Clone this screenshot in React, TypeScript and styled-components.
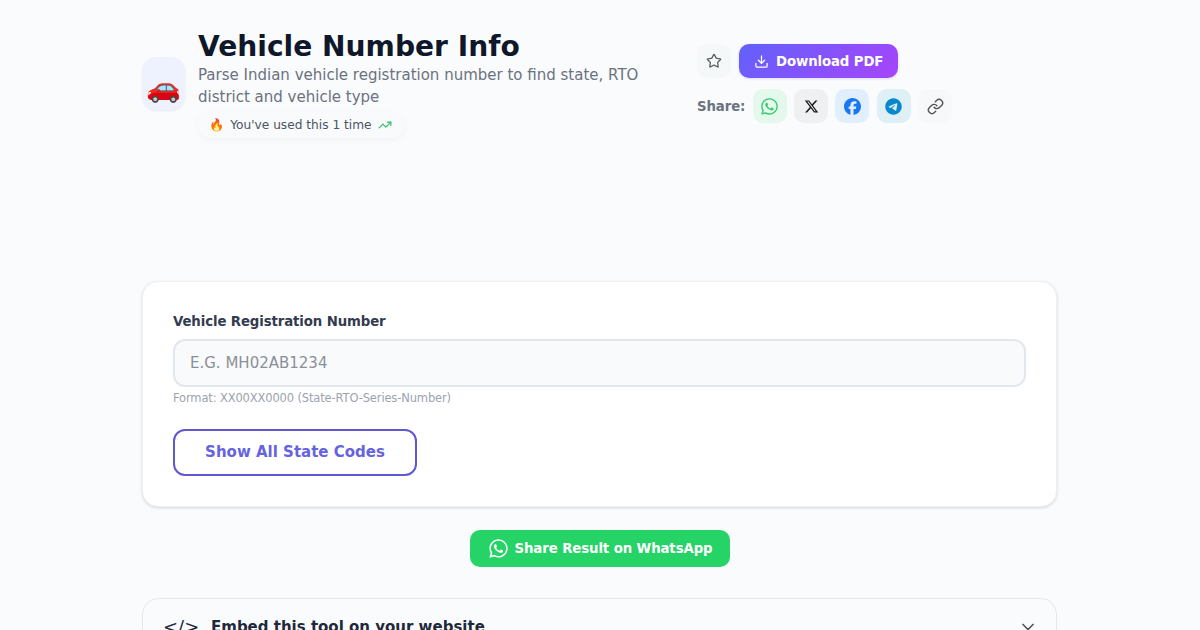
import React from "react";
import styled, { createGlobalStyle } from "styled-components";
import { Star, Download, TrendingUp, Link, ChevronDown } from "lucide-react";
import { FaWhatsapp, FaXTwitter, FaFacebook, FaTelegram } from "react-icons/fa6";

const GlobalStyle = createGlobalStyle`
  * { box-sizing: border-box; }
  html, body { margin: 0; height: 630px; overflow: hidden; }
  body {
    background: #fafbfd;
    font-family: "DejaVu Sans", "Noto Color Emoji", sans-serif;
    color: #0f172a;
  }
  button, input { font-family: inherit; }
  svg { display: block; flex: none; }
`;

const Page = styled.main`
  width: 915px;
  margin-left: 142px;
  padding-top: 30px;
`;

const Header = styled.header`
  display: flex;
  align-items: flex-start;
  height: 251px;
`;

const ToolIcon = styled.div`
  display: flex;
  align-items: center;
  justify-content: center;
  width: 43px;
  height: 53px;
  margin: 27px 13px 0 0;
  padding-top: 8px;
  border-radius: 14px;
  background: #eef2ff;
  font-size: 28px;
  line-height: 1;
  box-shadow: 0 1px 2px rgba(15, 23, 42, 0.08);
`;

const Intro = styled.div`
  width: 460px;
  margin-right: 39px;
`;

const Title = styled.h1`
  margin: 0;
  font-size: 28.125px;
  line-height: 34px;
  font-weight: 700;
`;

const Description = styled.p`
  margin: 0;
  font-size: 15px;
  line-height: 22px;
  color: #6b7280;
`;

const Usage = styled.div`
  display: inline-flex;
  align-items: center;
  gap: 6px;
  height: 26px;
  margin-top: 4px;
  padding: 0 11px;
  border-radius: 13px;
  background: #f8fafb;
  color: #4b5563;
  font-size: 12.2px;
  box-shadow: 0 2px 8px rgba(15, 23, 42, 0.04);
`;

const Actions = styled.div`
  display: flex;
  flex-direction: column;
  gap: 11px;
  padding-top: 14px;
`;

const ActionRow = styled.div<{ $gap: number }>`
  display: flex;
  align-items: center;
  gap: ${(p) => p.$gap}px;
`;

const IconButton = styled.button<{ $bg: string; $color: string }>`
  display: flex;
  align-items: center;
  justify-content: center;
  width: 34px;
  height: 34px;
  padding: 0;
  border: 0;
  border-radius: 10px;
  background: ${(p) => p.$bg};
  color: ${(p) => p.$color};
`;

const DownloadButton = styled.button`
  display: flex;
  align-items: center;
  gap: 7px;
  height: 34px;
  width: 159px;
  padding: 0 15px;
  border: 0;
  border-radius: 10px;
  background: linear-gradient(135deg, #6161fb, #a845fb);
  color: #fff;
  font-size: 13.3px;
  letter-spacing: -0.11px;
  font-weight: 700;
  white-space: nowrap;
  box-shadow: 0 1px 3px rgba(99, 102, 241, 0.2);
`;

const ShareLabel = styled.span`
  font-size: 13.3px;
  letter-spacing: -0.1px;
  font-weight: 700;
  color: #6b7280;
`;

const Card = styled.section`
  height: 226px;
  padding: 31px 30px;
  border: 1px solid #eef0f3;
  border-radius: 16px;
  background: #fff;
  box-shadow: 0 1px 3px rgba(15, 23, 42, 0.16);
`;

const Label = styled.label`
  display: block;
  font-size: 13.3px;
  letter-spacing: -0.11px;
  line-height: 18px;
  font-weight: 700;
  color: #333b50;
`;

const Input = styled.input`
  display: block;
  width: 100%;
  height: 48px;
  margin-top: 8px;
  padding: 0 15px 1px;
  border: 2px solid #e2e6ee;
  border-radius: 12px;
  background: #f9fafc;
  font-size: 15px;
  &::placeholder { color: #8b9097; opacity: 1; }
`;

const Hint = styled.p`
  margin: 3px 0 22px;
  font-size: 11.5px;
  letter-spacing: -0.14px;
  line-height: 17px;
  color: #9ca3af;
`;

const OutlineButton = styled.button`
  display: block;
  width: 244px;
  height: 47px;
  padding: 0 0 2px;
  border: 2px solid #6058d0;
  border-radius: 12px;
  background: #fff;
  color: #6663df;
  font-size: 15px;
  font-weight: 700;
`;

const WhatsAppButton = styled.button`
  display: flex;
  align-items: center;
  justify-content: center;
  gap: 6px;
  width: 260px;
  height: 37px;
  margin: 23px 0 31px 328px;
  padding: 0;
  border: 0;
  border-radius: 10px;
  background: #25d366;
  color: #fff;
  font-size: 13.3px;
  letter-spacing: -0.1px;
  font-weight: 700;
`;

const EmbedPanel = styled.section`
  display: flex;
  align-items: center;
  height: 57px;
  padding: 0 18px 0 20px;
  border: 1px solid #e5e7eb;
  border-radius: 16px;
  background: #fafbfd;
  font-size: 15px;
  font-weight: 700;
  color: #1e293b;
`;

const CodeMark = styled.span`
  width: 48px;
  font-weight: 400;
  font-size: 18px;
`;

const Chevron = styled(ChevronDown)`
  margin-left: auto;
  color: #555;
`;

export default function App() {
  return (
    <>
      <GlobalStyle />
      <Page>
        <Header>
          <ToolIcon>🚗</ToolIcon>
          <Intro>
            <Title>Vehicle Number Info</Title>
            <Description>
              Parse Indian vehicle registration number to find state, RTO district and vehicle type
            </Description>
            <Usage>
              <span>🔥</span>
              <span>You've used this 1 time</span>
              <TrendingUp size={14} color="#35bd68" />
            </Usage>
          </Intro>
          <Actions>
            <ActionRow $gap={8}>
              <IconButton $bg="#f5f8f9" $color="#606266" aria-label="Favourite">
                <Star size={16} />
              </IconButton>
              <DownloadButton>
                <Download size={15} />
                Download PDF
              </DownloadButton>
            </ActionRow>
            <ActionRow $gap={7.4}>
              <ShareLabel>Share:</ShareLabel>
              <IconButton $bg="#e5f8ec" $color="#35cb70" aria-label="WhatsApp">
                <FaWhatsapp size={19} />
              </IconButton>
              <IconButton $bg="#eff0f2" $color="#18191b" aria-label="X">
                <FaXTwitter size={15} />
              </IconButton>
              <IconButton $bg="#e1eefb" $color="#1877f2" aria-label="Facebook">
                <FaFacebook size={17} />
              </IconButton>
              <IconButton $bg="#deeff5" $color="#0788cc" aria-label="Telegram">
                <FaTelegram size={17} />
              </IconButton>
              <IconButton $bg="#f7f8f9" $color="#555" aria-label="Copy link">
                <Link size={17} />
              </IconButton>
            </ActionRow>
          </Actions>
        </Header>
        <Card>
          <Label htmlFor="reg">Vehicle Registration Number</Label>
          <Input id="reg" placeholder="E.G. MH02AB1234" />
          <Hint>Format: XX00XX0000 (State-RTO-Series-Number)</Hint>
          <OutlineButton>Show All State Codes</OutlineButton>
        </Card>
        <WhatsAppButton>
          <FaWhatsapp size={21} />
          Share Result on WhatsApp
        </WhatsAppButton>
        <EmbedPanel>
          <CodeMark>&lt;/&gt;</CodeMark>
          <span>Embed this tool on your website</span>
          <Chevron size={20} />
        </EmbedPanel>
      </Page>
    </>
  );
}
